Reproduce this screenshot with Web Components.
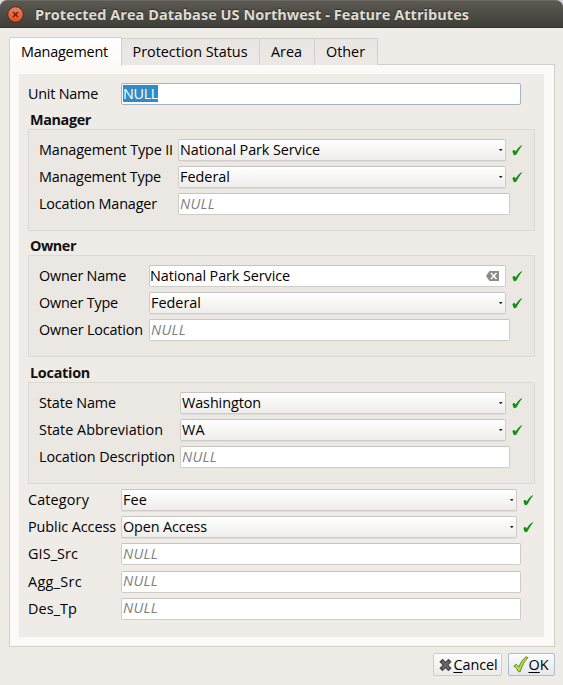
<!DOCTYPE html>
<html lang="en"><head><meta charset="utf-8"><title>Feature Attributes</title>
<style>
html,body{margin:0;height:685px;overflow:hidden;background:#d8d8dc}
body{font:14.4px "Open Sans","Noto Sans",sans-serif;color:#000}
</style></head><body>
<feature-dialog></feature-dialog>
<script>
const define=(name,cls)=>customElements.define(name,cls);
class Base extends HTMLElement{
  connectedCallback(){
    if(this.shadowRoot)return;
    const t=document.createElement('template');t.innerHTML=this.view();
    this.attachShadow({mode:'open'}).append(t.content.cloneNode(true));
    this.ready&&this.ready();
  }
  a(n){return this.getAttribute(n)||''}
}
// Text run tracked to a given advance width.
define('fit-text',class extends Base{
  view(){return `<style>:host{display:inline-block;white-space:pre;line-height:22px;flex:none}span{display:inline-block}u{text-decoration-thickness:1px;text-underline-offset:2px}</style><span>${this.a('key')?`<u>${this.a('key')}</u>`:''}${this.a('text')}</span>`}
  ready(){
    const s=this.shadowRoot.querySelector('span'),w=+this.a('w');
    const n=s.textContent.length;
    s.style.letterSpacing=((w-s.getBoundingClientRect().width)/n)+'px';
  }
});
define('title-bar',class extends Base{
  view(){return `<style>:host{display:flex;box-sizing:border-box;height:28px;flex:none;align-items:center;padding:1px 0 0 7px;gap:11px;background:linear-gradient(#5b5952,#3f3e39);border-top:1px solid #6c6a63;border-bottom:1px solid #33322e;border-radius:7px 7px 0 0;color:#dfdbd2;font-weight:700;font-size:14.5px;text-shadow:0 -1px 1px #2b2a27}svg{flex:none}</style>
  <svg width="17" height="17" viewBox="0 0 17 17"><defs><linearGradient id="g" x2="0" y2="1"><stop stop-color="#f4805b"/><stop offset="1" stop-color="#e34b1c"/></linearGradient></defs><circle cx="8.5" cy="8.5" r="7.8" fill="url(#g)" stroke="#34302b"/><path d="M6 6l5 5M11 6l-5 5" stroke="#4b2117" stroke-width="1.3"/></svg>
  <fit-text w="434" text="Protected Area Database US Northwest - Feature Attributes"></fit-text>`}
});
define('tab-item',class extends Base{
  view(){return `<style>:host{display:flex;box-sizing:border-box;height:27px;margin-top:1px;width:${this.a('width')}px;justify-content:center;align-items:center;border:1px solid #d4d0cc;border-left:0;border-bottom:0;background:linear-gradient(#e9e5e3,#ece8e5);padding-right:1px}
  :host([active]){height:29px;margin:0 0 -1px;border-left:1px solid #d4d0cc;background:linear-gradient(#fff,#fdf9f6);border-radius:2px 0 0;padding:0 2px 1px 0;position:relative}</style><slot></slot>`}
});
define('check-mark',class extends Base{
  view(){return `<style>:host{display:block;width:11px;height:11px;flex:none}svg{display:block}</style><svg width="11" height="11" viewBox="0 0 11 11"><path d="M.4 6.2C1.300 4.900 2.700 4.800 3.200 5.700L3.700 6.600C5.200 4 6.800 1.900 8.400.9 9 .5 9.700.5 10.400.6 8.200 2.900 6.300 5.900 4.700 9.100 4.100 10.300 1.900 10.600 1.400 9.200Z" fill="#0d930f"/></svg>`}
});
// One labelled field. kind: combo, edit or clear.
define('form-row',class extends Base{
  view(){
    const k=this.a('kind'),nul=!this.a('value'),v=this.a('value')||'NULL';
    return `<style>:host{display:flex;height:22px;align-items:center}
    .label{width:var(--label);flex:none;display:flex}
    .box{box-sizing:border-box;height:22px;display:flex;align-items:center;flex:none;width:calc(var(--field) + 4px);border:1px solid #cfccc8;border-top-color:#c8c5c1;border-radius:2px;padding:0 0 1px 1px;background:#fff}
    .box.valid{width:var(--field);margin-right:6px}
    .box.clear{padding-left:0}
    .box.combo{background:linear-gradient(#fff,#eeedeb);box-shadow:0 1px 0 #e0ddda;}
    .null{font-style:italic;color:#808080}
    :host([selected]) .box{border-color:#a3b5c4;padding-left:1px}
    :host([selected]) .null{font-style:normal;color:#fff;background:#308cc6;height:17px;display:flex;align-items:center}
    svg{margin-left:auto;flex:none}</style>
    <div class="label"><fit-text w="${this.a('w')}" text="${this.a('label')}"></fit-text></div>
    <div class="box ${k} ${k!='edit'?'valid':''}"><span class="${nul?'null':''}"><fit-text w="${nul?35:this.a('vw')}" text="${v}"></fit-text></span>
    ${k=='combo'?'<svg style="margin-right:2px" width="5" height="4"><path d="M1 1h3.500L3.400 2.800H2.100Z" fill="#282828"/></svg>':k=='clear'?'<svg style="margin-right:6px" width="13" height="10" viewBox="0 0 13 10"><path d="M3.5 0H13v10H3.5L0 5Z" fill="#8c8c8a"/><path d="M5 2l5.5 6M10.500 2L5 8" stroke="#fff" stroke-width="1.5"/></svg>':''}</div>
    ${k!='edit'?'<check-mark></check-mark>':''}`}
});
define('field-group',class extends Base{
  view(){return `<style>:host{display:block;height:121px;margin-bottom:var(--after,5px)}
  h3{margin:0 0 0 2px;height:19px;display:flex;align-items:center;font-size:14.4px;font-weight:700;color:#111}
  .frame{box-sizing:border-box;height:102px;border:1px solid #dcd8d4;background:#ebe8e4;padding:9px 0 0 10px;display:flex;flex-direction:column;gap:5px;border-radius:1px}</style>
  <h3><fit-text w="${this.a('w')}" text="${this.a('title')}"></fit-text></h3><div class="frame"><slot></slot></div>`}
});
define('push-button',class extends Base{
  view(){return `<style>:host{display:flex;box-sizing:border-box;height:23px;border:1px solid #cfcbc7;border-radius:2px;background:linear-gradient(#fdfdfd,#edebe9);align-items:center;padding-left:4px}:host([primary]){border-color:#aebdcc;background:linear-gradient(#fbfcfd,#e3e8ec)}</style><slot></slot>`}
});
define('feature-dialog',class extends Base{
  view(){return `<style>
  :host{display:flex;flex-direction:column;width:563px;height:685px;background:#efebe7;border-radius:7px 7px 0 0}
  nav{display:flex;align-items:flex-start;height:28px;margin:9px 0 -1px 9px;z-index:1}
  .pane{box-sizing:border-box;width:546px;height:583px;margin-left:9px;background:#fdf9f6;border:1px solid #d2cec9;padding:9px}
  .page{box-sizing:border-box;height:563px;width:525px;background:#efebe7;padding:9px 9px 0}
  form{margin:0;display:flex;flex-direction:column}
  .rest{display:grid;gap:5.2px}
  footer{display:flex;justify-content:flex-end;gap:6px;padding:6px 8.500px 0 0}
  .c{width:69px}.o{width:47px}
  </style>
  <title-bar></title-bar>
  <nav><tab-item active width="113"><fit-text w="87" text="Management"></fit-text></tab-item><tab-item width="138"><fit-text w="115" text="Protection Status"></fit-text></tab-item><tab-item width="55"><fit-text w="31" text="Area"></fit-text></tab-item><tab-item width="63"><fit-text w="39" text="Other"></fit-text></tab-item></nav>
  <div class="pane"><div class="page"><form>
  <form-row selected style="--label:93px;--field:396px;margin-bottom:5px" kind="edit" label="Unit Name" w="70"></form-row>
  <field-group title="Manager" w="61" style="--label:139px;--field:328px">
   <form-row kind="combo" label="Management Type II" w="134" value="National Park Service" vw="140"></form-row>
   <form-row kind="combo" label="Management Type" w="122" value="Federal" vw="50"></form-row>
   <form-row kind="edit" label="Location Manager" w="118"></form-row></field-group>
  <field-group title="Owner" w="46" style="--label:110px;--field:357px;--after:6px">
   <form-row kind="clear" label="Owner Name" w="87" value="National Park Service" vw="140"></form-row>
   <form-row kind="combo" label="Owner Type" w="79" value="Federal" vw="50"></form-row>
   <form-row kind="edit" label="Owner Location" w="104"></form-row></field-group>
  <field-group title="Location" w="60" style="--label:141px;--field:326px">
   <form-row kind="combo" label="State Name" w="77" value="Washington" vw="79"></form-row>
   <form-row kind="combo" label="State Abbreviation" w="124" value="WA" vw="23"></form-row>
   <form-row kind="edit" label="Location Description" w="136"></form-row></field-group>
  <div class="rest" style="--label:93px;--field:396px">
   <form-row kind="combo" label="Category" w="61" value="Fee" vw="24"></form-row>
   <form-row kind="combo" label="Public Access" w="88" value="Open Access" vw="84"></form-row>
   <form-row kind="edit" label="GIS_Src" w="50"></form-row>
   <form-row kind="edit" label="Agg_Src" w="54"></form-row>
   <form-row kind="edit" label="Des_Tp" w="49"></form-row></div>
  </form></div></div>
  <footer><push-button class="c"><svg width="16" height="14" viewBox="0 0 16 14"><path d="M4.500 3.800l6 6.400M10.500 3.800l-6 6.400" stroke="#414141" stroke-width="4.400" stroke-linecap="square"/><path d="M4 3.300l7 7.400M11 3.300l-7 7.400" stroke="#696969" stroke-width="2.400"/></svg><fit-text w="44" key="C" text="ancel"></fit-text></push-button>
  <push-button primary class="o"><svg width="16" height="17" viewBox="0 0 16 17"><path d="M.8 10.200L3.200 8.200 6 11C7.500 6.500 10 3 13 .8L15 1.600C11.500 5 9 10 7.200 15.700H5.500C4.500 13.600 3 11.500.8 10.200Z" fill="#b4da48" stroke="#66891e"/></svg><fit-text w="20" key="O" text="K"></fit-text></push-button></footer>`}
});
</script></body></html>
